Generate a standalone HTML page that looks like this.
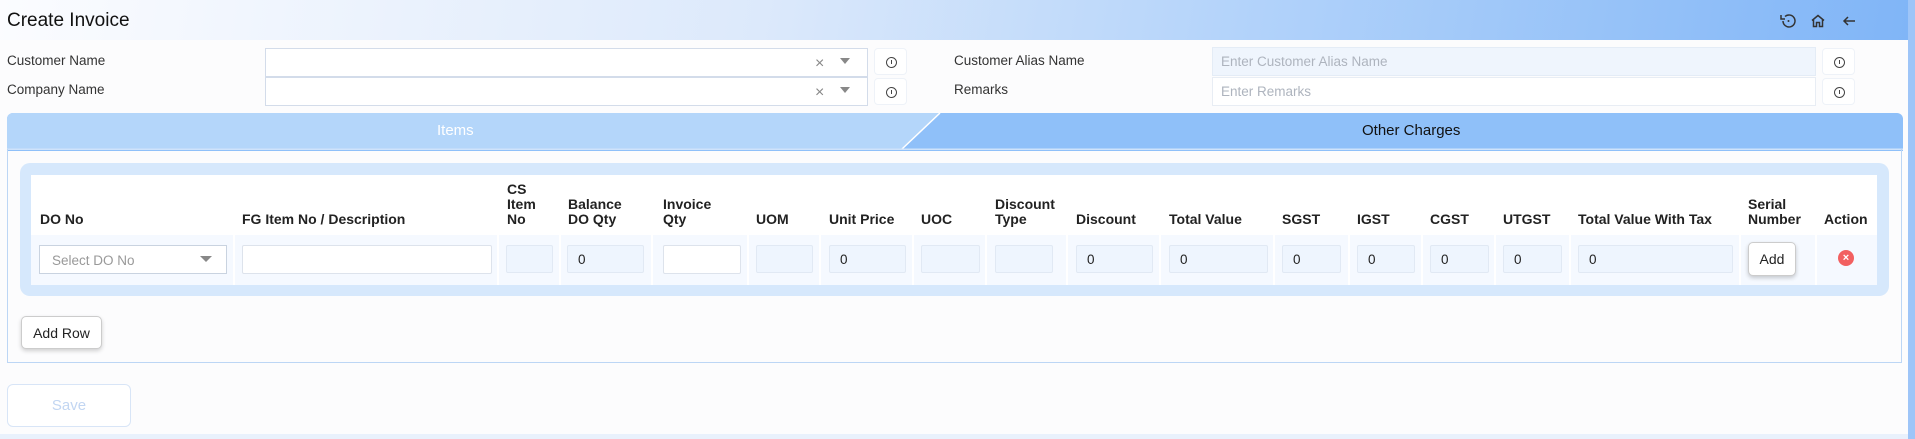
<!DOCTYPE html>
<html><head><meta charset="utf-8"><style>
*{box-sizing:border-box;margin:0;padding:0}
body{width:1915px;height:439px;overflow:hidden;background:#fcfcfd;font-family:"Liberation Sans",Arial,sans-serif;color:#222;position:relative}
.a{position:absolute}
.hdr{left:0;top:0;width:1908px;height:40px;background:linear-gradient(100deg,#fbfcff 0%,#dce9fb 40%,#b3d3fa 65%,#80b5f7 100%)}
.strip{left:1908px;top:0;width:7px;height:439px;background:#9ec5f8}
.lbl{font-size:13.5px;color:#333}
.inp{background:#fff;border:1px solid #d3dcea}
.info{width:33px;height:27px;border:1px solid #eef2f8;border-radius:4px;background:#fff}
.info:after{content:"";position:absolute;left:11px;top:8px;width:9px;height:9px;border:1.3px solid #444;border-radius:50%}
.info:before{content:"";position:absolute;left:15.5px;top:11px;width:1.3px;height:4px;background:#444;z-index:1}
.th{font-size:14px;font-weight:600;color:#222;line-height:15px;bottom:auto}
.ci{height:28px;background:#eef5fe;border:1px solid #e1e9f4;border-radius:2px;top:245px;font-size:13.5px;padding:6px 0 0 10px;color:#222}
.sep{top:235px;width:2px;height:50px;background:#fff}
</style></head><body>
<div class="a hdr"></div>
<div class="a strip"></div>
<div class="a" style="left:7px;top:10px;font-size:19px;color:#111">Create Invoice</div>
<svg class="a" style="left:1778px;top:11px" width="80" height="20" viewBox="0 0 80 20" fill="none" stroke="#333" stroke-width="1.5">
<path d="M5 10a6 6 0 1 0 2-4.5"/><path d="M3 4v4h4" /><circle cx="10.5" cy="10" r="1" fill="#333" stroke="none"/>
<path d="M34 9.5l6-5 6 5M35.5 8.5v7h3v-4h3v4h3v-7"/>
<path d="M77 10h-11M70 6l-4 4 4 4"/>
</svg>

<div class="a lbl" style="left:7px;top:53px">Customer Name</div>
<div class="a lbl" style="left:7px;top:82px">Company Name</div>
<div class="a inp" style="left:265px;top:48px;width:603px;height:29px"></div>
<div class="a inp" style="left:265px;top:77px;width:603px;height:29px"></div>
<div class="a" style="left:815px;top:55px;font-size:16px;color:#888">×</div>
<div class="a" style="left:815px;top:84px;font-size:16px;color:#888">×</div>
<div class="a" style="left:840px;top:58px;border:5px solid transparent;border-top:6px solid #888"></div>
<div class="a" style="left:840px;top:87px;border:5px solid transparent;border-top:6px solid #888"></div>
<div class="a info" style="left:874px;top:48px"></div>
<div class="a info" style="left:874px;top:78px"></div>

<div class="a lbl" style="left:954px;top:53px">Customer Alias Name</div>
<div class="a lbl" style="left:954px;top:82px">Remarks</div>
<div class="a" style="left:1212px;top:47px;width:604px;height:29px;background:#eff5fd;border:1px solid #e4ecf6;font-size:13.5px;color:#aeb4be;padding:6px 0 0 8px">Enter Customer Alias Name</div>
<div class="a" style="left:1212px;top:77px;width:604px;height:29px;background:#fff;border:1px solid #e8edf4;font-size:13.5px;color:#aeb4be;padding:6px 0 0 8px">Enter Remarks</div>
<div class="a info" style="left:1822px;top:48px"></div>
<div class="a info" style="left:1822px;top:78px"></div>

<!-- tabs -->
<svg class="a" style="left:7px;top:113px" width="1896" height="38">
<path d="M6 0H1890a6 6 0 0 1 6 6V38H0V6a6 6 0 0 1 6-6z" fill="#8fc0f9"/>
<path d="M6 0H933L895 36H0V6a6 6 0 0 1 6-6z" fill="#b4d6fa"/>
<path d="M933 0L895 36" stroke="#fff" stroke-width="1.5"/>
<rect x="0" y="35.5" width="1896" height="1.5" fill="#cfe3fb"/>
</svg>
<div class="a" style="left:437px;top:122px;font-size:15px;color:#fff">Items</div>
<div class="a" style="left:1362px;top:122px;font-size:15px;color:#111">Other Charges</div>

<div class="a" style="left:7px;top:149px;width:1895px;height:214px;border:1px solid #bcd6f5;border-top:none"></div>
<div class="a" style="left:20px;top:163px;width:1869px;height:133px;background:#d6e8fc;border-radius:10px"></div>
<div class="a" style="left:31px;top:175px;width:1846px;height:110px;background:#fff"></div>
<div class="a" style="left:31px;top:235px;width:1846px;height:50px;background:#f5f9ff"></div>

<div class="a th" style="left:40px;top:212px">DO No</div>
<div class="a th" style="left:242px;top:212px">FG Item No / Description</div>
<div class="a th" style="left:507px;top:182px">CS<br>Item<br>No</div>
<div class="a th" style="left:568px;top:197px">Balance<br>DO Qty</div>
<div class="a th" style="left:663px;top:197px">Invoice<br>Qty</div>
<div class="a th" style="left:756px;top:212px">UOM</div>
<div class="a th" style="left:829px;top:212px">Unit Price</div>
<div class="a th" style="left:921px;top:212px">UOC</div>
<div class="a th" style="left:995px;top:197px">Discount<br>Type</div>
<div class="a th" style="left:1076px;top:212px">Discount</div>
<div class="a th" style="left:1169px;top:212px">Total Value</div>
<div class="a th" style="left:1282px;top:212px">SGST</div>
<div class="a th" style="left:1357px;top:212px">IGST</div>
<div class="a th" style="left:1430px;top:212px">CGST</div>
<div class="a th" style="left:1503px;top:212px">UTGST</div>
<div class="a th" style="left:1578px;top:212px">Total Value With Tax</div>
<div class="a th" style="left:1748px;top:197px">Serial<br>Number</div>
<div class="a th" style="left:1824px;top:212px">Action</div>

<div class="a sep" style="left:233px"></div><div class="a sep" style="left:497px"></div><div class="a sep" style="left:559px"></div><div class="a sep" style="left:651px"></div><div class="a sep" style="left:747px"></div><div class="a sep" style="left:819px"></div><div class="a sep" style="left:912px"></div><div class="a sep" style="left:985px"></div><div class="a sep" style="left:1066px"></div><div class="a sep" style="left:1159px"></div><div class="a sep" style="left:1273px"></div><div class="a sep" style="left:1348px"></div><div class="a sep" style="left:1421px"></div><div class="a sep" style="left:1494px"></div><div class="a sep" style="left:1569px"></div><div class="a sep" style="left:1739px"></div><div class="a sep" style="left:1815px"></div>

<div class="a" style="left:39px;top:245px;width:188px;height:29px;background:#fff;border:1px solid #c9d3e0;font-size:13.5px;color:#999;padding:7px 0 0 12px">Select DO No</div>
<div class="a" style="left:200px;top:256px;border:5px solid transparent;border-top:6px solid #888;border-left-width:6px;border-right-width:6px"></div>
<div class="a" style="left:242px;top:245px;width:250px;height:29px;background:#fff;border:1px solid #dde3ec;border-radius:2px"></div>
<div class="a ci" style="left:506px;width:47px"></div>
<div class="a ci" style="left:567px;width:77px">0</div>
<div class="a" style="left:663px;top:245px;width:78px;height:29px;background:#fff;border:1px solid #dde3ec;border-radius:2px"></div>
<div class="a ci" style="left:756px;width:57px"></div>
<div class="a ci" style="left:829px;width:77px">0</div>
<div class="a ci" style="left:921px;width:59px"></div>
<div class="a ci" style="left:995px;width:58px"></div>
<div class="a ci" style="left:1076px;width:77px">0</div>
<div class="a ci" style="left:1169px;width:99px">0</div>
<div class="a ci" style="left:1282px;width:59px">0</div>
<div class="a ci" style="left:1357px;width:58px">0</div>
<div class="a ci" style="left:1430px;width:59px">0</div>
<div class="a ci" style="left:1503px;width:59px">0</div>
<div class="a ci" style="left:1578px;width:155px">0</div>
<div class="a" style="left:1748px;top:242px;width:48px;height:34px;background:#fff;border:1px solid #ccc;border-radius:5px;box-shadow:0 2px 4px rgba(0,0,0,.2);font-size:14px;text-align:center;padding-top:8px">Add</div>
<div class="a" style="left:1838px;top:250px;width:16px;height:16px;border-radius:50%;background:#f26060;color:#fff;font-size:11px;font-weight:bold;text-align:center;line-height:16px">×</div>

<div class="a" style="left:21px;top:316px;width:81px;height:33px;background:#fff;border:1px solid #ccc;border-radius:5px;box-shadow:0 2px 4px rgba(0,0,0,.18);font-size:14px;text-align:center;padding-top:8px">Add Row</div>
<div class="a" style="left:7px;top:384px;width:124px;height:43px;background:#fff;border:1px solid #d8e5f7;border-radius:6px;font-size:15px;color:#c2d6f2;text-align:center;padding-top:12px">Save</div>
<div class="a" style="left:0;top:434px;width:1908px;height:5px;background:#e9f1fc"></div>
</body></html>
